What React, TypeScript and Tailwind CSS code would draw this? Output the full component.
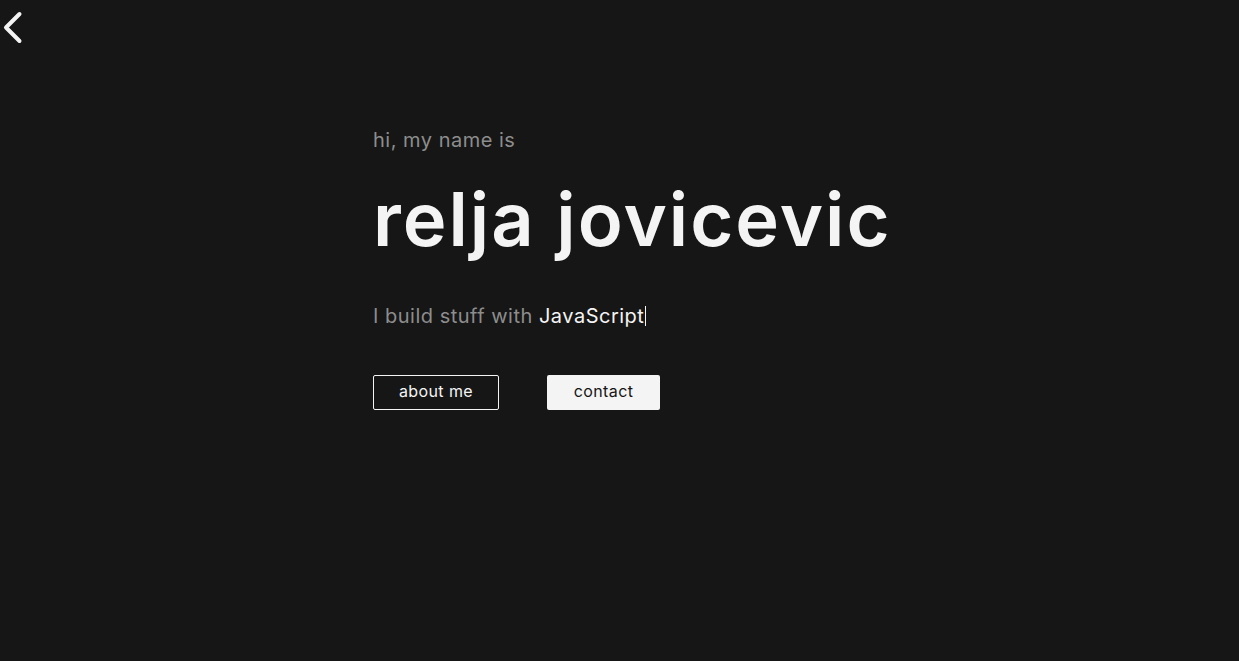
export default function App() {
  return (
    <main className="min-h-screen bg-[#161616] text-[#f4f4f4] font-['Inter',sans-serif]">
      <button className="absolute left-0 top-0">
        <svg width="30" height="50" viewBox="0 0 30 50" fill="none">
          <path d="M19.5 14 L6 27.5 L19.5 41" stroke="#f4f4f4" strokeWidth="4" strokeLinecap="round" strokeLinejoin="round" />
        </svg>
      </button>
      <section className="pl-[373px] pt-[128px]">
        <p className="text-[20px] leading-6 tracking-wide text-[#8d8d8d]">hi, my name is</p>
        <h1 className="mt-[19px] text-[74px] leading-[96px] font-semibold tracking-[0.027em]">relja jovicevic</h1>
        <p className="mt-[37px] text-[20px] leading-6 tracking-wide text-[#8d8d8d]">
          I build stuff with <span className="text-[#f4f4f4]">JavaScript</span>
          <span className="inline-block w-px h-[20px] ml-px align-[-3px] bg-[#f4f4f4]" />
        </p>
        <div className="mt-[47px] flex gap-12">
          <button className="w-[126px] h-[35px] pb-[3px] rounded-[2px] border border-[#f4f4f4] text-[16px] tracking-wide">about me</button>
          <button className="w-[113px] h-[35px] pb-[3px] rounded-[2px] bg-[#f4f4f4] text-[#161616] text-[16px] tracking-wide">contact</button>
        </div>
      </section>
    </main>
  );
}
